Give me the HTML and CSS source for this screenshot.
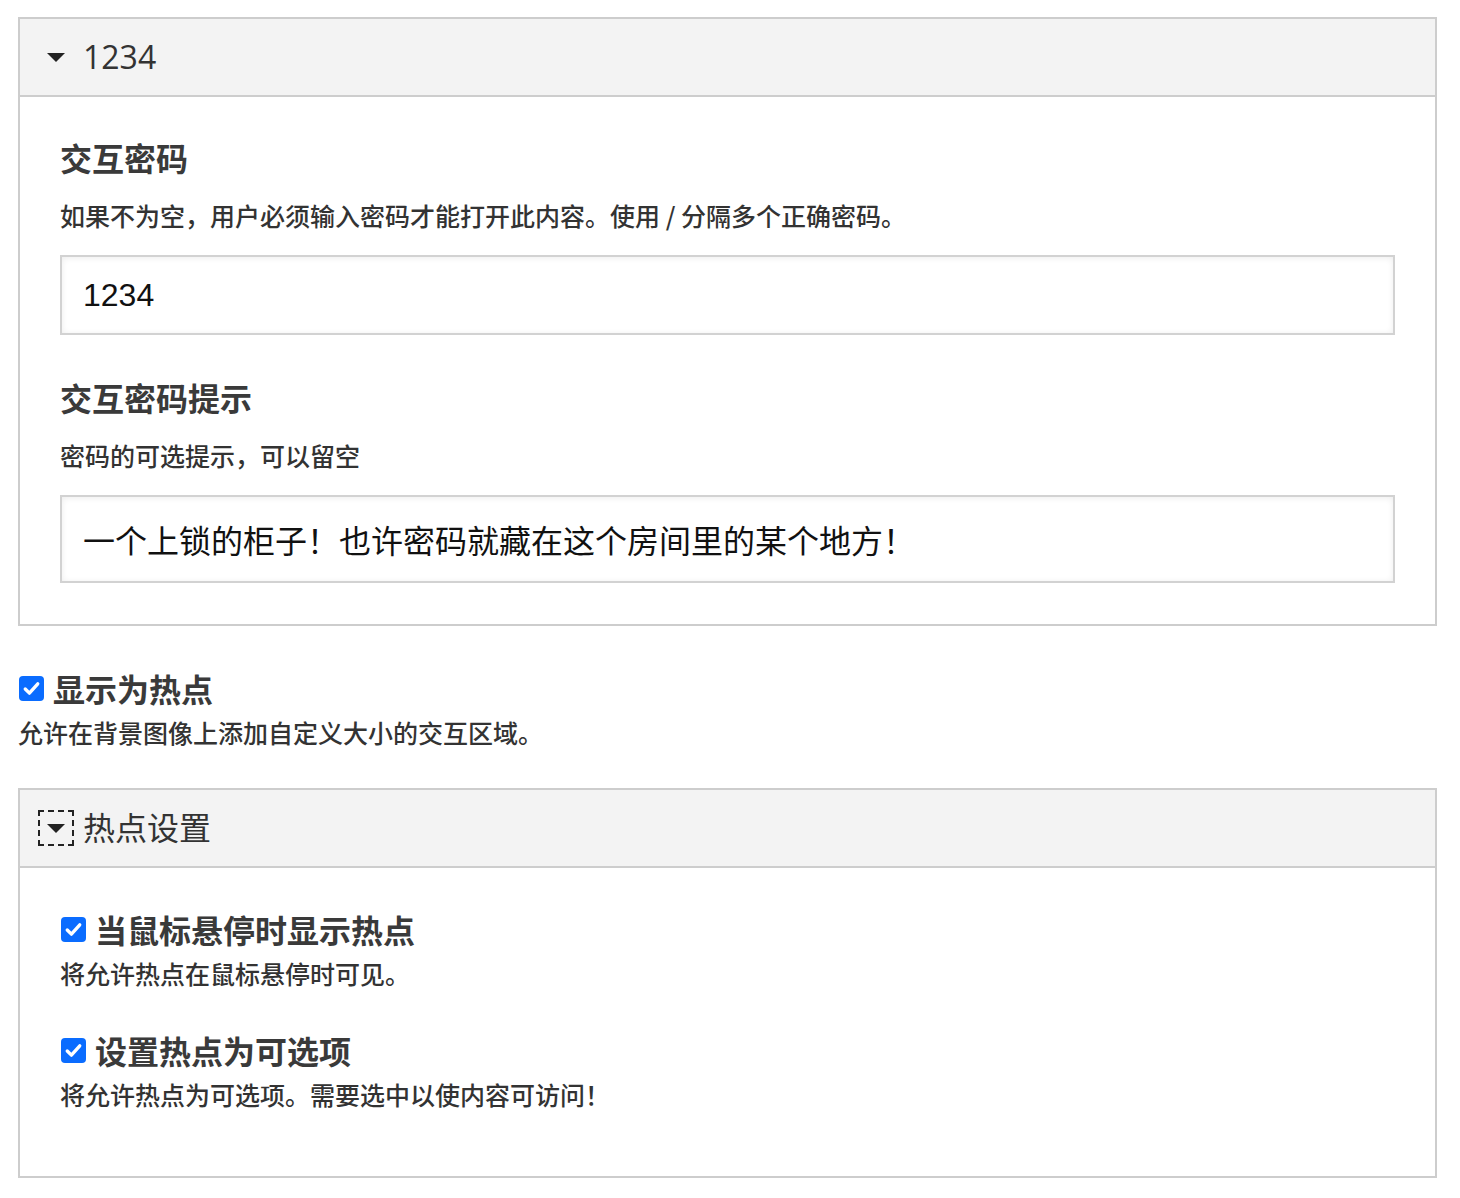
FILE: index.html
```html
<!DOCTYPE html>
<html lang="zh-CN">

<head>
    <meta charset="UTF-8">
    <meta name="viewport" content="width=device-width, initial-scale=1.0">
    <title>交互设置</title>
    <link rel="stylesheet" href="styles.css">
</head>

<body>
    <main>
        <details class="panel" open>
            <summary>
                <span class="caret"></span>
                <span class="panel-title">1234</span>
            </summary>
            <div class="panel-body">
                <div class="field">
                    <h3>交互密码</h3>
                    <p>如果不为空，用户必须输入密码才能打开此内容。使用 / 分隔多个正确密码。</p>
                    <input type="text" class="is-short" value="1234">
                </div>
                <div class="field">
                    <h3>交互密码提示</h3>
                    <p>密码的可选提示，可以留空</p>
                    <input type="text" class="is-tall" value="一个上锁的柜子！也许密码就藏在这个房间里的某个地方！">
                </div>
            </div>
        </details>

        <div class="check is-top">
            <label>
                <span class="box">
                    <svg viewBox="0 0 24 24" width="25" height="25">
                        <path d="M6 12.5l4 4 8-9" fill="none" stroke="#fff" stroke-width="3.2" stroke-linecap="round" stroke-linejoin="round" />
                    </svg>
                </span>
                显示为热点
            </label>
            <p>允许在背景图像上添加自定义大小的交互区域。</p>
        </div>

        <details class="panel is-last" open>
            <summary>
                <span class="caret is-focus"></span>
                <span class="panel-title">热点设置</span>
            </summary>
            <div class="panel-body is-checks">
                <div class="check">
                    <label>
                        <span class="box">
                            <svg viewBox="0 0 24 24" width="25" height="25">
                                <path d="M6 12.5l4 4 8-9" fill="none" stroke="#fff" stroke-width="3.2" stroke-linecap="round" stroke-linejoin="round" />
                            </svg>
                        </span>
                        当鼠标悬停时显示热点
                    </label>
                    <p>将允许热点在鼠标悬停时可见。</p>
                </div>
                <div class="check">
                    <label>
                        <span class="box">
                            <svg viewBox="0 0 24 24" width="25" height="25">
                                <path d="M6 12.5l4 4 8-9" fill="none" stroke="#fff" stroke-width="3.2" stroke-linecap="round" stroke-linejoin="round" />
                            </svg>
                        </span>
                        设置热点为可选项
                    </label>
                    <p>将允许热点为可选项。需要选中以使内容可访问！</p>
                </div>
            </div>
        </details>
    </main>
</body>

</html>
```

FILE: styles.css
```css
*,
*::before,
*::after {
    box-sizing: border-box;
    margin: 0;
    padding: 0;
}

body {
    font-family: "Open Sans", "Noto Sans CJK SC", sans-serif;
    color: #333;
    background: white;
    margin: 17px 23px 0 18px;
}

.panel {
    border: 2px solid #cdcdcd;

    & summary {
        display: flex;
        align-items: center;
        gap: 9px;
        height: 78px;
        padding: 0 18px;
        background-color: #f3f3f3;
        border-bottom: 2px solid #cdcdcd;
        list-style: none;
        cursor: pointer;
    }

    &.is-last {
        margin-top: 38px;
    }
}

.caret {
    width: 36px;
    height: 36px;
    display: grid;
    place-content: center;

    &::before {
        content: "";
        border-left: 9px solid transparent;
        border-right: 9px solid transparent;
        border-top: 9px solid #222;
    }

    &.is-focus {
        outline: 2px dashed #222;
        outline-offset: -2px;
    }
}

.panel-title {
    font-size: 32px;
    line-height: 40px;
    color: #333;
}

.panel-body {
    padding: 40px 40px 41px;

    &.is-checks {
        padding: 41px 40px 64px;

        & .check + .check {
            margin-top: 39px;
        }
    }
}

.field {
    & + .field {
        margin-top: 42px;
    }

    & h3 {
        font-family: "Noto Sans CJK SC", sans-serif;
        font-size: 32px;
        font-weight: 700;
        line-height: 40px;
        color: #3a3a3a;
    }

    & p {
        font-family: "Noto Sans CJK SC", sans-serif;
        font-size: 25px;
        font-weight: 500;
        line-height: 36px;
        margin: 20px 0 22px;
        color: #333;
    }

    & input {
        display: block;
        width: 100%;
        height: 80px;
        padding: 0 21px;
        border: 2px solid #d2d2d2;
        box-shadow: inset 0 1px 6px rgba(0, 0, 0, 0.08);
        font-family: "Liberation Sans", "Noto Sans CJK SC", sans-serif;
        font-size: 32px;
        color: #111;
        background: white;
        outline: none;

        &.is-tall {
            height: 88px;
        }
    }
}

.check {
    &.is-top {
        margin-top: 42px;
    }

    & label {
        display: flex;
        align-items: center;
        gap: 9px;
        font-family: "Noto Sans CJK SC", sans-serif;
        font-size: 32px;
        font-weight: 700;
        line-height: 40px;
        color: #3a3a3a;
        margin-left: 1px;
    }

    & .box {
        width: 25px;
        height: 25px;
        border-radius: 4px;
        background: #0a6cff;
        display: grid;
        place-content: center;
    }

    & p {
        font-family: "Noto Sans CJK SC", sans-serif;
        font-size: 25px;
        font-weight: 500;
        line-height: 36px;
        margin-top: 6px;
        color: #333;
    }
}
```
